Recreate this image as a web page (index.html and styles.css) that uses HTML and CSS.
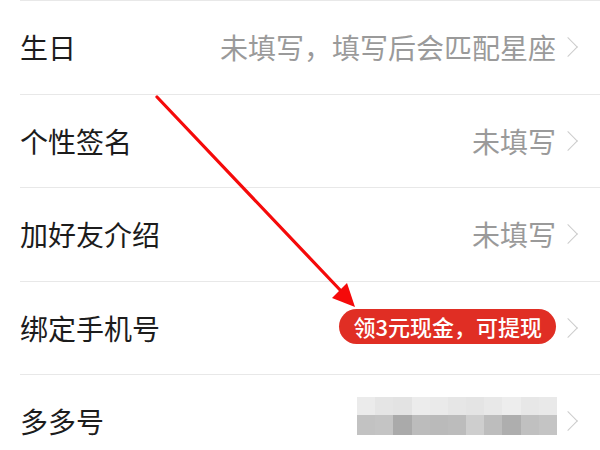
FILE: index.html
```html
<!DOCTYPE html>
<html lang="zh">
<head>
<meta charset="utf-8">
<link rel="stylesheet" href="styles.css">
</head>
<body>
<div class="page">
  <ul class="list">
    <li class="row"><span class="label">生日</span><span class="value">未填写，填写后会匹配星座</span><span class="chev"></span></li>
    <li class="row"><span class="label">个性签名</span><span class="value">未填写</span><span class="chev"></span></li>
    <li class="row"><span class="label">加好友介绍</span><span class="value">未填写</span><span class="chev"></span></li>
    <li class="row"><span class="label">绑定手机号</span><span class="badge">领3元现金，可提现</span><span class="chev"></span></li>
    <li class="row"><span class="label">多多号</span>
      <span class="mosaic">
        <i style="background:#ebebeb"></i><i style="background:#e5e5e5"></i><i style="background:#e3e3e3"></i><i style="background:#ececec"></i><i style="background:#eaeaea"></i><i style="background:#e6e6e6"></i><i style="background:#e4e4e4"></i><i style="background:#e8e8e8"></i><i style="background:#ededed"></i><i style="background:#e7e7e7"></i><i style="background:#e9e9e9"></i>
        <i style="background:#c2c2c2"></i><i style="background:#c4c4c4"></i><i style="background:#aaaaaa"></i><i style="background:#bcbcbc"></i><i style="background:#bababa"></i><i style="background:#bcbcbc"></i><i style="background:#cecece"></i><i style="background:#bdbdbd"></i><i style="background:#aeaeae"></i><i style="background:#c0c0c0"></i><i style="background:#c4c4c4"></i>
      </span><span class="chev"></span></li>
  </ul>
  <svg class="arrow" width="600" height="450" viewBox="0 0 600 450">
    <line x1="157" y1="97" x2="342" y2="292" stroke="#f50a0a" stroke-width="3.2" stroke-linecap="round"/>
    <polygon points="355,307 332,298 347,283" fill="#f50a0a"/>
  </svg>
</div>
</body>
</html>
```
FILE: styles.css
```css
html, body {
  margin: 0;
  padding: 0;
  background: #ffffff;
}
.page {
  position: relative;
  width: 600px;
  height: 450px;
  overflow: hidden;
  font-family: "Noto Sans CJK SC", "Noto Sans", sans-serif;
}
.list {
  list-style: none;
  margin: 0;
  padding: 0 0 0 20px;
}
.row {
  display: flex;
  align-items: center;
  height: 93.5px;
  box-sizing: border-box;
  border-top: 1px solid #e8e8e8;
  padding-right: 25px;
}
.label {
  flex: 1;
  font-size: 28px;
  color: #1c1c1c;
  line-height: 1;
}
.value {
  font-size: 28px;
  color: #9a9a9a;
  line-height: 1;
  margin-right: 5px;
}
.chev {
  width: 14px;
  height: 14px;
  border-top: 1.6px solid #cccccc;
  border-right: 1.6px solid #cccccc;
  transform: rotate(45deg);
  box-sizing: border-box;
}
.badge {
  background: #e02e24;
  color: #fff;
  font-size: 22px;
  font-weight: 500;
  line-height: 35px;
  height: 35px;
  padding: 0 14px;
  border-radius: 18px;
  margin-right: 5px;
  margin-top: -3px;
}
.mosaic {
  display: grid;
  grid-template-columns: repeat(11, 1fr);
  grid-template-rows: 18px 20px;
  width: 200px;
  margin-right: 4px;
  margin-top: -10px;
}
.mosaic i {
  display: block;
}
.arrow {
  position: absolute;
  left: 0;
  top: 0;
  pointer-events: none;
}
```
